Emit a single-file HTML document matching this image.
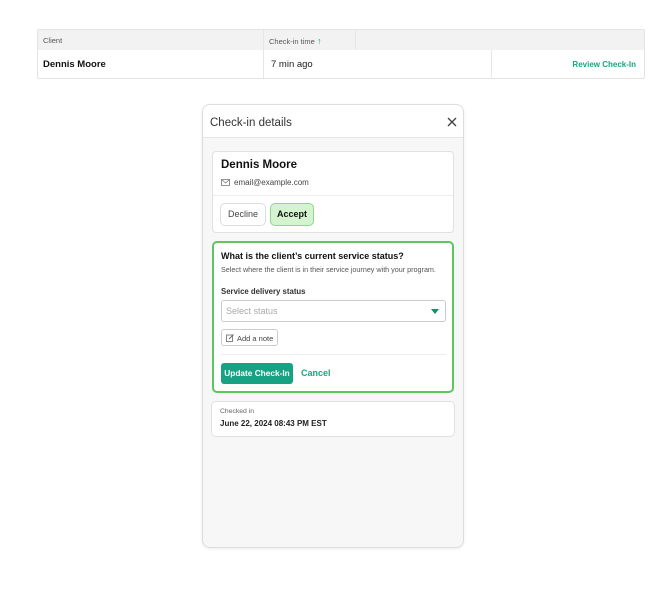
<!DOCTYPE html>
<html><head><style>
*{box-sizing:border-box;margin:0;padding:0}
body{width:670px;height:591px;background:#fff;font-family:"Liberation Sans",sans-serif;position:relative;overflow:hidden;color:#222}
.a{position:absolute}
</style></head><body>
<div class="a" style="left:37px;top:29px;width:608px;height:50px;border:1px solid #e3e3e3;border-radius:2px;overflow:hidden">
 <div class="a" style="left:0;top:0;width:608px;height:20px;background:#f2f2f2"></div>
 <div class="a" style="left:225px;top:0;width:1px;height:20px;background:#e6e6e6"></div>
 <div class="a" style="left:317px;top:0;width:1px;height:20px;background:#e6e6e6"></div>
 <div class="a" style="left:225px;top:20px;width:1px;height:29px;background:#e6e6e6"></div>
 <div class="a" style="left:453px;top:20px;width:1px;height:29px;background:#e6e6e6"></div>
 <div class="a" style="left:5px;top:6px;font-size:7.5px;color:#555">Client</div>
 <div class="a" style="left:231px;top:6px;font-size:7.5px;color:#555">Check-in time <span style="color:#1aa57f;font-weight:bold;font-size:9px">↑</span></div>
 <div class="a" style="left:5px;top:29px;font-size:9.5px;font-weight:bold;color:#111">Dennis Moore</div>
 <div class="a" style="left:233px;top:29px;font-size:9.5px;color:#222">7 min ago</div>
 <div class="a" style="right:8px;top:30px;font-size:8px;font-weight:bold;color:#1aa57f">Review Check-In</div>
</div>
<div class="a" style="left:202px;top:104px;width:262px;height:444px;border:1px solid #ddd;border-radius:8px;background:#f7f7f7;overflow:hidden;box-shadow:0 1px 3px rgba(0,0,0,.08)">
 <div class="a" style="left:0;top:0;width:262px;height:33px;background:#fff;border-bottom:1px solid #e6e6e6"></div>
 <div class="a" style="left:7px;top:12px;font-size:11.5px;color:#333">Check-in details</div>
 <svg class="a" style="left:244px;top:12px" width="10" height="10" viewBox="0 0 10 10"><path d="M1 1L9 9M9 1L1 9" stroke="#444" stroke-width="1.4"/></svg>
 <div class="a" style="left:9px;top:46px;width:242px;height:82px;background:#fff;border:1px solid #e0e0e0;border-radius:4px">
  <div class="a" style="left:8px;top:7px;font-size:11.5px;font-weight:bold;color:#111">Dennis Moore</div>
  <svg class="a" style="left:8px;top:27px" width="9" height="7" viewBox="0 0 9 7"><rect x=".5" y=".5" width="8" height="6" fill="none" stroke="#777" stroke-width=".8"/><path d="M.5 .5L4.5 4L8.5 .5" fill="none" stroke="#777" stroke-width=".8"/></svg>
  <div class="a" style="left:21px;top:26px;font-size:8px;color:#444">email@example.com</div>
  <div class="a" style="left:0;top:43px;width:240px;height:1px;background:#eee"></div>
  <div class="a" style="left:7px;top:51px;width:46px;height:23px;border:1px solid #ddd;border-radius:5px;font-size:9px;color:#444;text-align:center;line-height:21px">Decline</div>
  <div class="a" style="left:57px;top:51px;width:44px;height:23px;border:1px solid #8fd68f;background:#d4f4cf;border-radius:5px;font-size:9px;font-weight:bold;color:#111;text-align:center;line-height:21px">Accept</div>
 </div>
 <div class="a" style="left:9px;top:136px;width:242px;height:152px;background:#fff;border:2px solid #5cc85c;border-radius:5px">
  <div class="a" style="left:7px;top:8px;font-size:9px;font-weight:bold;color:#111">What is the client’s current service status?</div>
  <div class="a" style="left:7px;top:22px;font-size:7.2px;color:#555">Select where the client is in their service journey with your program.</div>
  <div class="a" style="left:7px;top:44px;font-size:7.8px;font-weight:bold;color:#333">Service delivery status</div>
  <div class="a" style="left:7px;top:57px;width:225px;height:22px;border:1px solid #ccc;border-radius:3px">
   <div class="a" style="left:4px;top:5px;font-size:9px;color:#aaa">Select status</div>
   <svg class="a" style="left:209px;top:8px" width="8" height="5"><path d="M0 0H8L4 5Z" fill="#138f6b"/></svg>
  </div>
  <div class="a" style="left:7px;top:86px;width:57px;height:17px;border:1px solid #ccc;border-radius:3px">
   <svg class="a" style="left:4px;top:4px" width="8" height="8" viewBox="0 0 8 8"><rect x=".5" y="1" width="6" height="6.5" fill="none" stroke="#666" stroke-width=".8"/><path d="M3 5L7.5 .5" stroke="#666" stroke-width=".9"/></svg>
   <div class="a" style="left:15px;top:3.5px;font-size:7.5px;color:#444;white-space:nowrap">Add a note</div>
  </div>
  <div class="a" style="left:7px;top:111px;width:225px;height:1px;background:#eee"></div>
  <div class="a" style="left:7px;top:120px;width:72px;height:21px;background:#17a383;border-radius:3px;font-size:8.3px;font-weight:bold;color:#fff;text-align:center;line-height:21px;white-space:nowrap">Update Check-In</div>
  <div class="a" style="left:87px;top:125px;font-size:9px;font-weight:bold;color:#1aa57f">Cancel</div>
 </div>
 <div class="a" style="left:8px;top:296px;width:244px;height:36px;background:#fff;border:1px solid #e0e0e0;border-radius:5px">
  <div class="a" style="left:8px;top:6px;font-size:6.8px;color:#666">Checked in</div>
  <div class="a" style="left:8px;top:17px;font-size:8px;font-weight:bold;color:#222">June 22, 2024 08:43 PM EST</div>
 </div>
</div>
</body></html>
